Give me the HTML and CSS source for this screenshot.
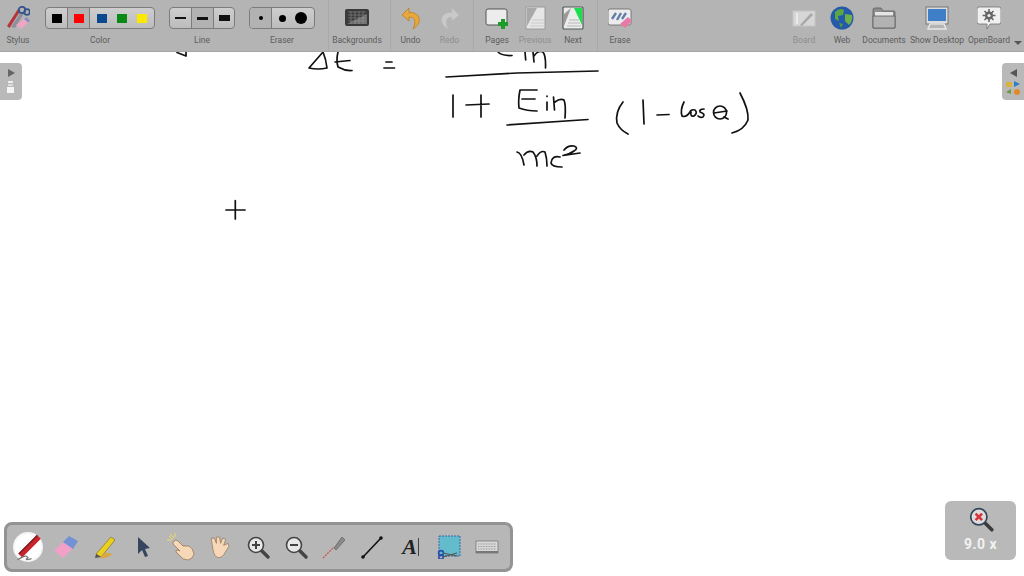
FILE: index.html
```html
<!DOCTYPE html>
<html lang="en">
<head>
  <meta charset="UTF-8" />
  <title>OpenBoard</title>
  <link rel="stylesheet" href="styles.css">
</head>
<body>
  <div class="board">

    <div class="toolbar">
      <div class="tool w36">
        <svg class="icon" viewBox="0 0 24 24" width="24" height="24">
          <path d="M1 20 L12 3 L14.5 4.5 L3.5 22 Z" fill="#b5343c"/>
          <path d="M5 21 L15 6 L18 7.5 L9 22 Z" fill="#8d8f9c"/>
          <circle cx="16" cy="4" r="3.2" fill="none" stroke="#34558c" stroke-width="1.8"/>
          <circle cx="21" cy="6" r="2.8" fill="none" stroke="#34558c" stroke-width="1.8"/>
          <path d="M10 19 L19 12 L23 16 L15 23 Z" fill="#eea6c4"/>
          <path d="M18 13 L20.5 11 L24 14.5 L22 16.5 Z" fill="#7f8fc0"/>
        </svg>
        <span class="label">Stylus</span>
      </div>

      <div class="tool w110 ml9">
        <div class="btn-group">
          <div class="seg w22"><i class="swatch black"></i></div>
          <div class="seg w22 on"><i class="swatch red"></i></div>
          <div class="seg grow">
            <i class="swatch blue"></i><i class="swatch green"></i><i class="swatch yellow"></i>
          </div>
        </div>
        <span class="label">Color</span>
      </div>

      <div class="tool w66 ml14">
        <div class="btn-group">
          <div class="seg w22"><i class="dash thin"></i></div>
          <div class="seg w22 on"><i class="dash mid"></i></div>
          <div class="seg grow"><i class="dash thick"></i></div>
        </div>
        <span class="label">Line</span>
      </div>

      <div class="tool w66 ml14">
        <div class="btn-group">
          <div class="seg w22 on"><i class="dot small"></i></div>
          <div class="seg grow"><i class="dot medium"></i><i class="dot large"></i></div>
        </div>
        <span class="label">Eraser</span>
      </div>

      <div class="sep ml13"></div>

      <div class="tool w56">
        <svg class="icon" viewBox="0 0 24 24" width="24" height="24">
          <rect x="0" y="3" width="24" height="17" rx="2" fill="#3a3a3a"/>
          <path d="M3 6 H21 M3 9 H21 M3 12 H21 M3 15 H21 M6 5 V18 M10 5 V18 M14 5 V18 M18 5 V18" stroke="#8b8b8b" stroke-width=".6"/>
          <path d="M2 18 L22 8 V18 Z" fill="#a5a5a5" opacity=".5"/>
        </svg>
        <span class="label">Backgrounds</span>
      </div>

      <div class="sep ml5"></div>

      <div class="tool w39">
        <svg class="icon" viewBox="0 0 24 24" width="24" height="24">
          <path d="M10 2 L3 9 L10 15 V11 C15 11 18 14 14 23 C23 18 23 6 10 6.5 Z" fill="#e8a73a" stroke="#b07c20" stroke-width=".7"/>
        </svg>
        <span class="label">Undo</span>
      </div>
      <div class="tool w39">
        <svg class="icon" viewBox="0 0 24 24" width="24" height="24">
          <path d="M14 2 L21 9 L14 15 V11 C9 11 6 14 10 23 C1 18 1 6 14 6.5 Z" fill="#c9c9c9" stroke="#bcbcbc" stroke-width=".7"/>
        </svg>
        <span class="label off">Redo</span>
      </div>

      <div class="sep ml4"></div>

      <div class="tool w38 ml4">
        <svg class="icon" viewBox="0 0 24 24" width="24" height="24">
          <rect x="1" y="3" width="21" height="16" rx="2" fill="#ececec" stroke="#555" stroke-width="1"/>
          <path d="M13 16 H16 V13 H20 V16 H23 V20 H20 V23 H16 V20 H13 Z" fill="#1f9a2c"/>
        </svg>
        <span class="label">Pages</span>
      </div>
      <div class="tool w38">
        <svg class="icon" viewBox="0 0 24 24" width="24" height="24">
          <rect x="3" y="1" width="19" height="22" fill="#e6e6e6" stroke="#9a9a9a"/>
          <path d="M4 2 H14 L4 20 Z" fill="#a9a9a9"/>
          <path d="M9 14 H21 M8 17 H21 M7 20 H21" stroke="#c9c9c9"/>
        </svg>
        <span class="label off">Previous</span>
      </div>
      <div class="tool w38">
        <svg class="icon" viewBox="0 0 24 24" width="24" height="24">
          <rect x="2" y="1" width="20" height="22" rx="1" fill="#ececec" stroke="#4e5a50" stroke-width="1.2"/>
          <path d="M13 2 H21 V19 Z" fill="#19e04c"/>
          <path d="M3 8 L10 2 L3 20 Z" fill="#9a9a9a"/>
          <path d="M8 14 H18 M7 17 H19 M6 20 H20" stroke="#b5b5b5"/>
        </svg>
        <span class="label">Next</span>
      </div>

      <div class="sep ml5"></div>

      <div class="tool w44">
        <svg class="icon" viewBox="0 0 24 24" width="24" height="24">
          <rect x="0" y="3" width="23" height="16" rx="2" fill="#ececec" stroke="#666" stroke-width=".8"/>
          <path d="M4 13 L8 7 M9 14 L13 7 M14 13 L18 7" stroke="#5f7ea8" stroke-width="2.4"/>
          <path d="M12 18 L20 11 L24 15 L17 22 Z" fill="#e87aa8"/>
        </svg>
        <span class="label">Erase</span>
      </div>

      <div class="spacer"></div>

      <div class="tool w38">
        <svg class="icon" viewBox="0 0 24 24" width="24" height="24">
          <rect x="1" y="5" width="22" height="15" fill="#d6d6d6" stroke="#c6c6c6"/>
          <path d="M8 19 L19 7 L21 9 L10 20 Z" fill="#a8a8a8"/>
          <path d="M5 7 V18" stroke="#f0f0f0" stroke-width="1.5"/>
        </svg>
        <span class="label off">Board</span>
      </div>
      <div class="tool w38">
        <svg class="icon" viewBox="0 0 24 24" width="24" height="24">
          <circle cx="12" cy="12" r="11.5" fill="#245aa8"/>
          <path d="M5 6 Q10 1 14 4 L13 9 L8 10 L9 15 L5 13 Z" fill="#59a745"/>
          <path d="M15 8 L22 9 Q23 15 19 19 L15 15 Z" fill="#6fb04a"/>
          <path d="M9 17 L13 18 L11 22 Z" fill="#4f9a46"/>
        </svg>
        <span class="label">Web</span>
      </div>
      <div class="tool w46">
        <svg class="icon" viewBox="0 0 24 24" width="24" height="24">
          <path d="M1 22 V4 Q1 2 3 2 H9 L11 5 H22 Q23 5 23 7 V22 Z" fill="#8e8e8e" stroke="#5c5c5c" stroke-width=".8"/>
          <path d="M3 6 H21 V10 H3 Z" fill="#e5e5e5"/>
          <path d="M1 22 V10 H23 V22 Z" fill="#b2b2b2" stroke="#5c5c5c" stroke-width=".8"/>
        </svg>
        <span class="label">Documents</span>
      </div>
      <div class="tool w60">
        <svg class="icon" viewBox="0 0 24 24" width="24" height="24">
          <rect x="1" y="1" width="22" height="17" fill="#dcdcdc" stroke="#777"/>
          <rect x="3" y="3" width="18" height="12" fill="#3f7fc8"/>
          <path d="M3 23 L5 18 H19 L21 23 Z" fill="none" stroke="#e6e6e6" stroke-width="1.5"/>
        </svg>
        <span class="label">Show Desktop</span>
      </div>
      <div class="tool w44">
        <svg class="icon" viewBox="0 0 24 24" width="24" height="24">
          <path d="M2 1 H22 Q24 1 24 3 V16 Q24 18 22 18 H13 L10 23 V18 H2 Q0 18 0 16 V3 Q0 1 2 1 Z" fill="#f0f0f0" stroke="#666" stroke-width=".7"/>
          <circle cx="12" cy="9.5" r="4" fill="#666"/>
          <path d="M12 3 V16 M5.5 9.5 H18.5 M7.5 5 L16.5 14 M16.5 5 L7.5 14" stroke="#666" stroke-width="1.6"/>
          <circle cx="12" cy="9.5" r="1.6" fill="#f0f0f0"/>
        </svg>
        <span class="label">OpenBoard</span>
      </div>
      <div class="more"><i class="caret"></i></div>
    </div>

    <!-- ink on the board -->
    <svg class="ink" viewBox="0 0 1024 576" width="1024" height="576">
      <path d="M177 52.5 L186 56 M186 52 V56"/>
      <path d="M323 52 L309 68 Q318 70 327 68 Q326 59 323 52"/>
      <path d="M338 52 Q336 60 338 67 Q345 71 352 70.5 M335 62 L350 60.5"/>
      <path d="M386 62 H392 M384 68 H394.5"/>
      <path d="M446 77 L517 73 L598 71"/>
      <path d="M498 52 Q502 56 512 55.5 M525 52 L525.7 60 M533 52 L534 62 M534 56 Q538 50 543 52 Q546 56 545.5 68"/>
      <path d="M453 95 V117 M466 105 L489 104 M481 95 V117"/>
      <path d="M537 90 L520 90 Q518 100 519 108 Q527 111 537 111 M522 99 H535"/>
      <path d="M547 102 V110 M547 96 V96.5 M553.5 97 L554.5 110 M555 102 Q560 98 564 100 Q566 105 565 118"/>
      <path d="M507 125 L588 119.5"/>
      <path d="M517 152 Q522 153 524 165 M524 155 Q528 150 533 152 Q537 157 537 166 M537 156 Q541 150 545 152 Q547 158 547 166"/>
      <path d="M560 157 Q552 155 551 163 Q552 167 562 167"/>
      <path d="M564 150 Q568 145 574 146 Q579 148 574 151 Q570 154 563 155.5 L580 153"/>
      <path d="M623 102 Q615 112 617 123 Q620 130 628 134"/>
      <path d="M643 100 L644 124 M657 115 L669 114.5"/>
      <path d="M684 102 Q680 110 682 116 Q686 118 690 112 Q691 109 695 110 Q698 113 694 116 Q690 117 691 112"/>
      <path d="M704 109 Q699 109 700 112 Q706 114 703 117 Q700 118 698 116"/>
      <ellipse cx="720" cy="112.5" rx="6.5" ry="6.5"/>
      <path d="M714 113 L727 111 M724 117 L728 119"/>
      <path d="M740 93 Q749 110 748 120 Q744 130 732 133"/>
      <path d="M226 210 H245 M235.3 200.7 V219"/>
    </svg>

    <div class="side side-left">
      <i class="arrow right"></i>
      <svg viewBox="0 0 10 14" width="10" height="14">
        <rect x="2" y="0" width="5" height="2" fill="#eee"/>
        <rect x="2" y="3" width="5" height="2" fill="#ddd"/>
        <rect x="1" y="6" width="7" height="6" fill="#f5f5f5"/>
      </svg>
    </div>

    <div class="side side-right">
      <i class="arrow left"></i>
      <svg viewBox="0 0 16 14" width="16" height="14">
        <rect x="1" y="1" width="6" height="5" fill="#d9b23c"/>
        <path d="M9 0 L15 3 L9 6 Z" fill="#2d7fc0"/>
        <path d="M1 11 L6 8 V13 Z" fill="#6f9a3e"/>
        <circle cx="12" cy="11" r="3" fill="#e08a2c"/>
      </svg>
    </div>

    <div class="dock">
      <div class="dock-item">
        <span class="pen-round">
          <svg viewBox="0 0 24 24" width="28" height="28">
            <path d="M4 18 L20 2 L23 5 L7 21 Z" fill="#c8242c"/>
            <path d="M4 18 L20 2" stroke="#7a1419" stroke-width="1.2"/>
            <path d="M3 23 Q10 18 12 21 Q8 24 15 22" fill="none" stroke="#777" stroke-width="1"/>
          </svg>
        </span>
      </div>
      <div class="dock-item">
        <svg viewBox="0 0 24 24" width="24" height="24">
          <path d="M0 15 L12 5 L21 11 L9 23 Z" fill="#f2a0c8"/>
          <path d="M9 7 L15 1 L24 6 L19 14 Z" fill="#7391d4"/>
        </svg>
      </div>
      <div class="dock-item">
        <svg viewBox="0 0 24 24" width="24" height="24">
          <path d="M3 19 L18 2 L22 5 L8 22 Z" fill="#ecd01e" stroke="#6e6420" stroke-width=".6"/>
          <path d="M3 19 L8 22 L2 23 Z" fill="#555"/>
          <path d="M7 23 Q13 15 19 19 Q15 24 7 23 Z" fill="#d8a844"/>
        </svg>
      </div>
      <div class="dock-item">
        <svg viewBox="0 0 24 24" width="24" height="24">
          <path d="M7 2 L19 13 L14 14 L17 21 L14 22 L11 15 L7 19 Z" fill="#36465e"/>
        </svg>
      </div>
      <div class="dock-item">
        <svg viewBox="0 0 28 28" width="28" height="28">
          <path d="M3 1 L7 5 M8 0 L8 4 M0 7 L4 7 M2 3 L6 7" stroke="#eedc60" stroke-width="1"/>
          <path d="M7 8 Q9 6 11 8 L16 13 L22 13 Q26 15 27 21 Q26 26 21 27 Q16 27 13 23 L9 19 Q8 17 11 17 L13 18 L6 11 Q6 9 7 8 Z" fill="#f6d8b8" stroke="#8a6a4a" stroke-width=".7"/>
        </svg>
      </div>
      <div class="dock-item">
        <svg viewBox="0 0 24 24" width="25" height="25">
          <path d="M5 9 L4 3 L7 3 L9 8 L9 2 L12 2 L13 8 L15 3 L18 4 L16 10 L20 8 L21 11 L16 19 Q13 23 9 21 Q6 19 5 9 Z" fill="#f6d8b8" stroke="#8a6a4a" stroke-width=".6"/>
        </svg>
      </div>
      <div class="dock-item">
        <svg viewBox="0 0 24 24" width="24" height="24">
          <path d="M15 15 L22 22" stroke="#444" stroke-width="3.4" stroke-linecap="round"/>
          <circle cx="10" cy="10" r="7.5" fill="#e8e8e8" stroke="#444" stroke-width="1.6"/>
          <path d="M6 10 H14 M10 6 V14" stroke="#444" stroke-width="2"/>
        </svg>
      </div>
      <div class="dock-item">
        <svg viewBox="0 0 24 24" width="24" height="24">
          <path d="M15 15 L22 22" stroke="#444" stroke-width="3.4" stroke-linecap="round"/>
          <circle cx="10" cy="10" r="7.5" fill="#e8e8e8" stroke="#444" stroke-width="1.6"/>
          <path d="M6 10 H14" stroke="#444" stroke-width="2"/>
        </svg>
      </div>
      <div class="dock-item">
        <svg viewBox="0 0 24 24" width="24" height="24">
          <path d="M1 23 L12 12" stroke="#d8504a" stroke-width="1.2" stroke-dasharray="2 1"/>
          <path d="M12 13 L20 2 L23 5 L14 15 Z" fill="#8a8a8a" stroke="#555" stroke-width=".6"/>
        </svg>
      </div>
      <div class="dock-item">
        <svg viewBox="0 0 24 24" width="24" height="24">
          <path d="M3 22 L21 3" stroke="#111" stroke-width="1.6"/>
          <circle cx="3" cy="22" r="1.8" fill="#111"/>
          <circle cx="21" cy="3" r="1.8" fill="#111"/>
        </svg>
      </div>
      <div class="dock-item"><span class="text-tool">A</span><i class="beam"></i></div>
      <div class="dock-item">
        <svg viewBox="0 0 24 24" width="24" height="24">
          <rect x="2" y="1" width="21" height="20" fill="#63bccb" stroke="#3f67a8" stroke-dasharray="2 1"/>
          <circle cx="4" cy="18" r="2.4" fill="none" stroke="#2a4ea8" stroke-width="1.6"/>
          <circle cx="4" cy="22" r="2.2" fill="none" stroke="#2a4ea8" stroke-width="1.6"/>
          <path d="M6 18 L20 21 M6 22 L20 18" stroke="#555" stroke-width="1.2"/>
        </svg>
      </div>
      <div class="dock-item">
        <svg viewBox="0 0 24 24" width="24" height="24">
          <rect x="1" y="6" width="22" height="12" fill="#d9d9d9" stroke="#777" stroke-width=".8"/>
          <path d="M3 9 H21 M3 11.5 H21 M3 14 H21" stroke="#999" stroke-dasharray="1 .6"/>
          <rect x="1" y="16" width="22" height="2" fill="#777"/>
        </svg>
      </div>
    </div>

    <div class="zoom-pod">
      <svg viewBox="0 0 24 24" width="26" height="26">
        <path d="M15 15 L22 22" stroke="#3a3a3a" stroke-width="3.2" stroke-linecap="round"/>
        <circle cx="10" cy="10" r="7.5" fill="#ddd" stroke="#34465c" stroke-width="1.6"/>
        <path d="M7 7 L13 13 M13 7 L7 13" stroke="#d8343c" stroke-width="2.4"/>
      </svg>
      <span class="zoom-value">9.0 x</span>
    </div>

  </div>
</body>
</html>
```

FILE: styles.css
```css
body {
  margin: 0;
  background: #fff;
  font-family: Roboto, "Liberation Sans", sans-serif;
  overflow: hidden;
}
.board {
  position: relative;
  width: 1024px;
  height: 576px;
  overflow: hidden;
  background: #fff;
}

/* top toolbar */
.toolbar {
  position: relative;
  z-index: 2;
  display: flex;
  height: 51px;
  background: #b4b4b4;
  border-bottom: 1px solid #a6a6a6;
}
.tool {
  display: flex;
  flex-direction: column;
  align-items: center;
  flex-shrink: 0;
}
.icon {
  height: 24px;
  margin: 6px 0 5px;
}
.label {
  font-size: 8.5px;
  line-height: 10px;
  color: #5c5c5c;
  white-space: nowrap;
}
.label.off {
  color: #8e8e8e;
}
.btn-group + .label {
  margin-top: 6px;
}
.w36 { width: 36px; }
.w38 { width: 38px; }
.w39 { width: 39px; }
.w44 { width: 44px; }
.w46 { width: 46px; }
.w56 { width: 56px; }
.w60 { width: 60px; }
.w66 { width: 66px; }
.w110 { width: 110px; }
.ml4 { margin-left: 4px; }
.ml5 { margin-left: 5px; }
.ml9 { margin-left: 9px; }
.ml13 { margin-left: 13px; }
.ml14 { margin-left: 14px; }
.sep {
  width: 1px;
  flex-shrink: 0;
  background: #a9a9a9;
}
.spacer {
  flex: 1;
}
.more {
  width: 13px;
  display: flex;
  justify-content: center;
  align-items: flex-end;
  padding-bottom: 6px;
}
.caret {
  width: 0;
  height: 0;
  border-left: 4px solid transparent;
  border-right: 4px solid transparent;
  border-top: 4px solid #555;
}

/* segmented buttons */
.btn-group {
  display: flex;
  box-sizing: border-box;
  width: 100%;
  height: 22px;
  margin-top: 7px;
  border: 1px solid #7c7c7c;
  border-radius: 4px;
  overflow: hidden;
  background: linear-gradient(#cecece, #bcbcbc);
}
.seg {
  display: flex;
  align-items: center;
  justify-content: space-around;
  box-sizing: border-box;
  border-right: 1px solid #7c7c7c;
}
.seg:last-child {
  border-right: none;
}
.seg.on {
  background: #b2b2b2;
}
.w22 { width: 22px; }
.grow {
  flex: 1;
  padding: 0 2px;
}
.swatch {
  width: 10px;
  height: 9px;
}
.black { background: #000; }
.red { background: #f00; }
.blue { background: #0a4a8c; }
.green { background: #0a8a14; }
.yellow { background: #fde800; }
.dash {
  width: 11px;
  background: #111;
}
.thin { height: 2px; }
.mid { height: 3px; }
.thick { height: 6px; }
.dot {
  display: block;
  border-radius: 50%;
  background: #000;
}
.small { width: 4px; height: 4px; }
.medium { width: 7px; height: 7px; }
.large { width: 12px; height: 12px; }

/* ink layer */
.ink {
  position: absolute;
  left: 0;
  top: 0;
  z-index: 1;
  fill: none;
  stroke: #111;
  stroke-width: 1.7;
  stroke-linecap: round;
  stroke-linejoin: round;
}

/* side tabs */
.side {
  position: absolute;
  z-index: 2;
  top: 63px;
  box-sizing: border-box;
  width: 22px;
  height: 37px;
  padding-top: 6px;
  display: flex;
  flex-direction: column;
  align-items: center;
  gap: 4px;
  background: #b9b9b9;
}
.side-left {
  left: 0;
  border-radius: 0 4px 4px 0;
}
.side-right {
  right: 0;
  border-radius: 4px 0 0 4px;
}
.arrow {
  width: 0;
  height: 0;
  border-top: 4px solid transparent;
  border-bottom: 4px solid transparent;
}
.arrow.right {
  border-left: 7px solid #666;
}
.arrow.left {
  border-right: 7px solid #555;
}

/* bottom dock */
.dock {
  position: absolute;
  z-index: 2;
  left: 4px;
  top: 522px;
  box-sizing: border-box;
  width: 509px;
  height: 50px;
  padding-left: 2px;
  display: grid;
  grid-template-columns: repeat(13, 38.25px);
  align-items: center;
  justify-items: center;
  background: #b7b7b7;
  border: 3px solid #939393;
  border-radius: 8px;
}
.dock-item {
  display: flex;
  align-items: center;
  justify-content: center;
}
.pen-round {
  display: flex;
  align-items: center;
  justify-content: center;
  width: 30px;
  height: 30px;
  border-radius: 50%;
  background: radial-gradient(#fff 55%, #d8d8d8);
}
.text-tool {
  font-family: "Liberation Serif", serif;
  font-style: italic;
  font-weight: bold;
  font-size: 22px;
  color: #222;
}
.beam {
  width: 1px;
  height: 18px;
  margin-left: 1px;
  background: #444;
}

/* zoom readout */
.zoom-pod {
  position: absolute;
  z-index: 2;
  left: 945px;
  top: 501px;
  box-sizing: border-box;
  width: 71px;
  height: 59px;
  padding-top: 5px;
  display: flex;
  flex-direction: column;
  align-items: center;
  gap: 3px;
  background: #b9b9b9;
  border-radius: 6px;
}
.zoom-value {
  font-family: Roboto, sans-serif;
  font-weight: bold;
  font-size: 14px;
  line-height: 18px;
  letter-spacing: .5px;
  color: #f2f2f2;
}
```
